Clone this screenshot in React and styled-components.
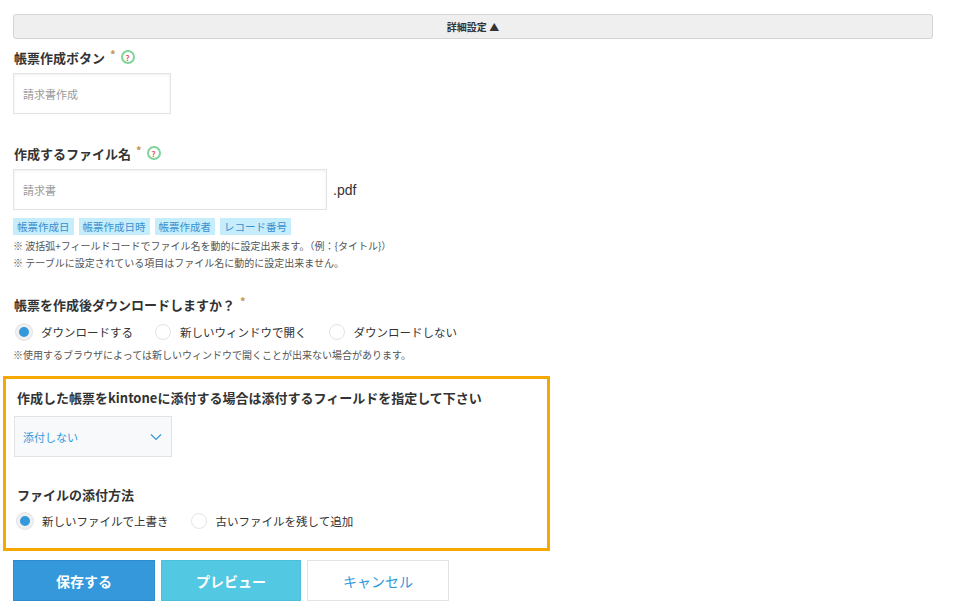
import React from "react";
import styled, { createGlobalStyle } from "styled-components";

const Global = createGlobalStyle`
  body { margin: 0; background: #fff; font-family: "Noto Sans CJK JP", "Noto Sans", sans-serif; color: #333; }
`;

const Page = styled.div`
  width: 960px;
  height: 615px;
  padding: 14px 0 0 13px;
  box-sizing: border-box;
  overflow: hidden;
`;

const Toggle = styled.div`
  width: 920px;
  height: 25px;
  box-sizing: border-box;
  border: 1px solid #d4d4d4;
  border-radius: 3px;
  background: #efefef;
  display: flex;
  align-items: center;
  justify-content: center;
  font-size: 10px;
  font-weight: 700;
  color: #333;
`;

const Label = styled.div`
  display: flex;
  align-items: center;
  gap: 5px;
  font-size: 13px;
  font-weight: 700;
  height: 20px;
  margin-top: ${(p) => p.$top}px;
  padding-left: ${(p) => p.$inset || 1}px;
`;

const Star = styled.span`
  color: #c09553;
  font-size: 11px;
  margin-top: -6px;
`;

const Help = styled.span`
  width: 14px;
  height: 14px;
  border: 2px solid #7fd49a;
  border-radius: 50%;
  box-sizing: border-box;
  display: inline-flex;
  align-items: center;
  justify-content: center;
  color: #e25b5b;
  font-size: 8px;
  font-weight: 700;
`;

const Row = styled.div`
  display: flex;
  align-items: center;
  gap: 6px;
  margin-top: ${(p) => p.$top || 0}px;
`;

const Input = styled.div`
  width: ${(p) => p.$w}px;
  height: 41px;
  box-sizing: border-box;
  border: 1px solid #e3e3e3;
  box-shadow: inset 0 1px 3px rgba(0, 0, 0, 0.06);
  display: flex;
  align-items: center;
  padding-left: 9px;
  font-size: 11px;
  color: #9a9a9a;
`;

const Suffix = styled.span`
  font-size: 14px;
  color: #333;
  font-family: "Liberation Sans", sans-serif;
`;

const Tags = styled.div`
  display: flex;
  gap: 5px;
  margin-top: 8px;
`;

const Tag = styled.span`
  background: #c5edfb;
  color: #3a8fce;
  font-size: 10.5px;
  height: 17px;
  line-height: 17px;
  padding: 0 4px;
`;

const Note = styled.div`
  font-size: 10px;
  color: #555;
  line-height: 17px;
  margin-top: ${(p) => p.$top || 0}px;
`;

const Radios = styled.div`
  display: flex;
  gap: 22px;
  margin-top: ${(p) => p.$top}px;
  padding-left: 3px;
`;

const Radio = styled.label`
  display: flex;
  align-items: center;
  gap: 9px;
  font-size: 11.5px;
  color: #333;
`;

const Dot = styled.span`
  width: 16px;
  height: 16px;
  border-radius: 50%;
  box-sizing: border-box;
  border: ${(p) => (p.$on ? "3px solid #f0f0f0" : "1px solid #e4e4e4")};
  background: ${(p) => (p.$on ? "#3498db" : "#fff")};
  box-shadow: ${(p) => (p.$on ? "0 0 0 1px #e4e4e4" : "none")};
`;

const Highlight = styled.div`
  width: 547px;
  height: 175px;
  box-sizing: border-box;
  border: 3px solid #f5a900;
  margin: 13px 0 0 -10px;
  padding: 8px 0 0 8px;
`;

const Select = styled.div`
  width: 158px;
  height: 41px;
  box-sizing: border-box;
  border: 1px solid #e3e3e3;
  background: #f7f9fa;
  display: flex;
  align-items: center;
  justify-content: space-between;
  padding: 0 9px 0 8px;
  font-size: 11px;
  color: #3498db;
  margin-top: 9px;
`;

const Buttons = styled.div`
  display: flex;
  gap: 6px;
  margin-top: 9px;
`;

const Button = styled.button`
  width: ${(p) => p.$w}px;
  height: 41px;
  border: 1px solid ${(p) => p.$border};
  background: ${(p) => p.$bg};
  color: ${(p) => p.$fg};
  font-family: inherit;
  font-size: 14px;
  font-weight: ${(p) => (p.$bold ? 700 : 400)};
`;

export default function App() {
  return (
    <Page>
      <Global />
      <Toggle>詳細設定 ▲</Toggle>
      <Label $top={8}>帳票作成ボタン<Star>*</Star><Help>?</Help></Label>
      <Row $top={6}><Input $w={158}>請求書作成</Input></Row>
      <Label $top={29}>作成するファイル名<Star>*</Star><Help>?</Help></Label>
      <Row $top={6}><Input $w={314}>請求書</Input><Suffix>.pdf</Suffix></Row>
      <Tags>
        <Tag>帳票作成日</Tag><Tag>帳票作成日時</Tag><Tag>帳票作成者</Tag><Tag>レコード番号</Tag>
      </Tags>
      <Note $top={2}>※ 波括弧+フィールドコードでファイル名を動的に設定出来ます。（例：{"{タイトル}"}）</Note>
      <Note>※ テーブルに設定されている項目はファイル名に動的に設定出来ません。</Note>
      <Label $top={23}>帳票を作成後ダウンロードしますか？<Star>*</Star></Label>
      <Radios $top={10}>
        <Radio><Dot $on />ダウンロードする</Radio>
        <Radio><Dot />新しいウィンドウで開く</Radio>
        <Radio><Dot />ダウンロードしない</Radio>
      </Radios>
      <Note $top={6}>※使用するブラウザによっては新しいウィンドウで開くことが出来ない場合があります。</Note>
      <Highlight>
        <Label $top={0} $inset={3}>作成した帳票をkintoneに添付する場合は添付するフィールドを指定して下さい</Label>
        <Select $top={0}>
          添付しない
          <svg width="12" height="8" viewBox="0 0 12 8"><path d="M1 1.5l5 5 5-5" fill="none" stroke="#3498db" strokeWidth="1.2" /></svg>
        </Select>
        <Label $top={27} $inset={3}>ファイルの添付方法</Label>
        <Radios $top={9}>
          <Radio><Dot $on />新しいファイルで上書き</Radio>
          <Radio><Dot />古いファイルを残して追加</Radio>
        </Radios>
      </Highlight>
      <Buttons>
        <Button $w={142} $bg="#3498db" $border="#2f8ccc" $fg="#fff" $bold>保存する</Button>
        <Button $w={140} $bg="#53c8e3" $border="#4cbfd9" $fg="#fff" $bold>プレビュー</Button>
        <Button $w={142} $bg="#fff" $border="#e3e3e3" $fg="#3498db">キャンセル</Button>
      </Buttons>
    </Page>
  );
}
